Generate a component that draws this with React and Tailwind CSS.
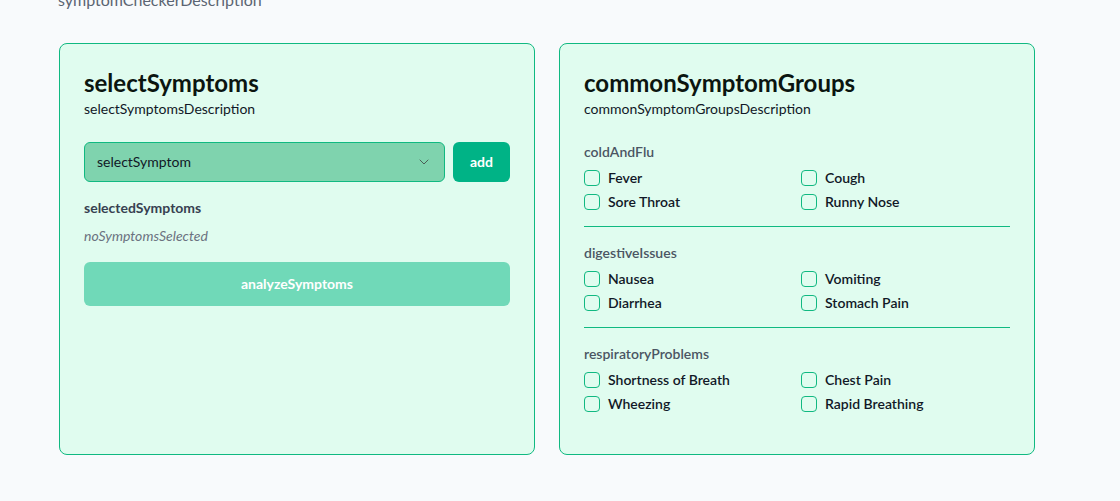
import React from 'react'
import { ChevronDown } from 'lucide-react'

const groups = [
  { title: 'coldAndFlu', items: ['Fever', 'Cough', 'Sore Throat', 'Runny Nose'] },
  { title: 'digestiveIssues', items: ['Nausea', 'Vomiting', 'Diarrhea', 'Stomach Pain'] },
  { title: 'respiratoryProblems', items: ['Shortness of Breath', 'Chest Pain', 'Wheezing', 'Rapid Breathing'] },
]

function App() {
  return (
    <div className="min-h-[501px] bg-[#f8fafc] pl-[59px] overflow-hidden font-['Lato',sans-serif]">
      <p className="-mt-3 -ml-[1px] text-base leading-6 text-[#5b6472]">symptomCheckerDescription</p>

      <div className="mt-[31px] w-[976px] grid grid-cols-2 gap-6">
        {/* Symptom picker */}
        <div className="h-[412px] rounded-lg border border-[#10b981] bg-[#e0fcef] px-6 pt-[23px] pb-6">
          <h2 className="text-2xl leading-8 font-bold text-[#0b1510]">selectSymptoms</h2>
          <p className="text-sm leading-5 text-[#111827]">selectSymptomsDescription</p>

          <div className="mt-[23px] flex gap-2">
            <div className="flex-1 h-10 flex items-center justify-between rounded-md border border-[#10b981] bg-[#7fd3ae] pl-3 pr-3">
              <span className="text-sm text-[#111827]">selectSymptom</span>
              <ChevronDown size={16} strokeWidth={1.5} className="text-[#4b5f56]" />
            </div>
            <button className="h-10 w-[57px] rounded-md bg-[#00b386] text-sm font-bold text-white">add</button>
          </div>

          <h3 className="mt-4 text-sm leading-5 font-bold text-[#374151]">selectedSymptoms</h3>
          <p className="mt-2 text-sm leading-5 italic text-[#6b7280]">noSymptomsSelected</p>

          <button className="mt-4 h-11 w-full rounded-md bg-[#70d9b8] text-sm font-bold text-white">
            analyzeSymptoms
          </button>
        </div>

        {/* Common groups */}
        <div className="h-[412px] rounded-lg border border-[#10b981] bg-[#e0fcef] px-6 pt-[23px] pb-6">
          <h2 className="text-2xl leading-8 font-bold text-[#0b1510]">commonSymptomGroups</h2>
          <p className="text-sm leading-5 text-[#111827]">commonSymptomGroupsDescription</p>

          <div className="mt-[23px]">
            {groups.map((g, i) => (
              <div key={g.title} className={i > 0 ? 'border-t border-[#10b981] pt-4' : ''}>
                <h4 className="text-sm leading-5 font-semibold text-[#4b5563]">{g.title}</h4>
                <div className="mt-[6px] grid grid-cols-2 gap-x-2 gap-y-1 pb-[14px]">
                  {g.items.map((s) => (
                    <label key={s} className="flex items-center gap-2 h-5">
                      <span className="w-4 h-4 rounded-[4px] border border-[#10b981]" />
                      <span className="text-sm font-semibold text-[#111827]">{s}</span>
                    </label>
                  ))}
                </div>
              </div>
            ))}
          </div>
        </div>
      </div>
    </div>
  )
}

export default App
